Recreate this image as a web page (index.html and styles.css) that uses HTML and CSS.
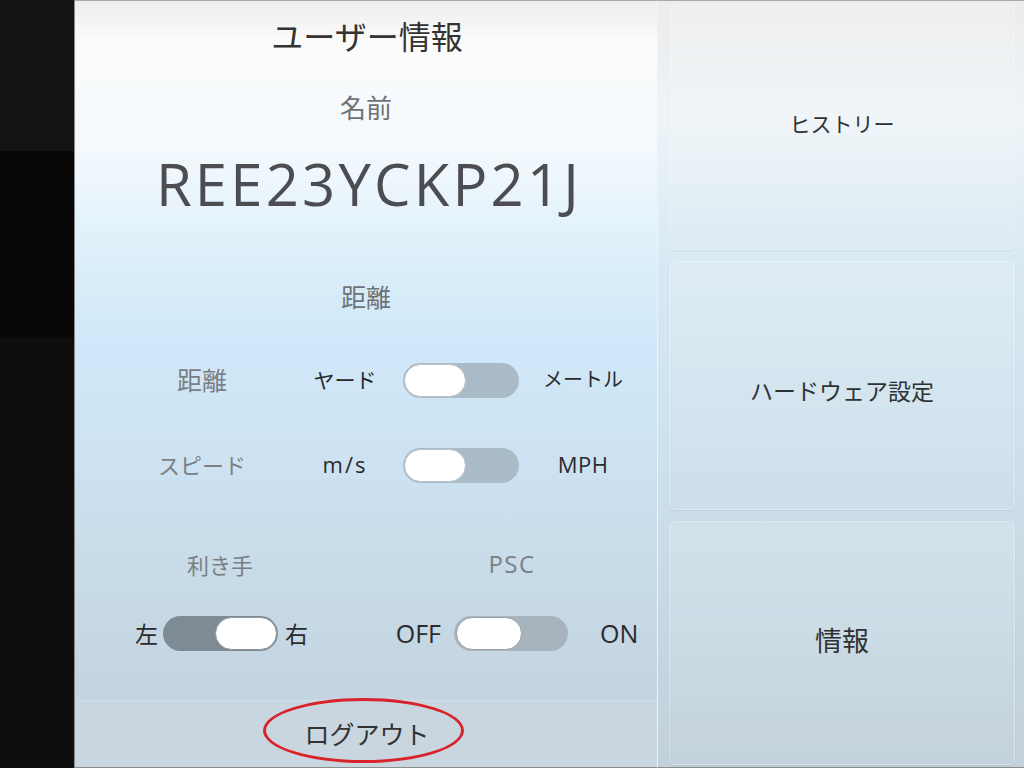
FILE: index.html
```html
<!DOCTYPE html>
<html lang="ja">
<head>
<meta charset="utf-8">
<title>ユーザー情報</title>
<link rel="stylesheet" href="styles.css">
</head>
<body>
<div class="screen">
  <aside class="side">
    <div class="side-a"></div>
    <div class="side-b"></div>
    <div class="side-c"></div>
  </aside>

  <main class="main">
    <h1 class="title">ユーザー情報</h1>
    <div class="name-label">名前</div>
    <div class="name-id">REE23YCKP21J</div>

    <div class="sec-head">距離</div>

    <div class="row row1">
      <span class="c1 lbl kanji">距離</span>
      <span class="c2 val">ヤード</span>
      <span class="toggle"><span class="knob"></span></span>
      <span class="c4 val">メートル</span>
    </div>

    <div class="row row2">
      <span class="c1 lbl">スピード</span>
      <span class="c2 val lat ms">m/s</span>
      <span class="toggle"><span class="knob"></span></span>
      <span class="c4 val lat">MPH</span>
    </div>

    <div class="pair-head">
      <span class="half lbl">利き手</span>
      <span class="half lbl lat psc">PSC</span>
    </div>

    <div class="pair-row">
      <div class="half group-l">
        <span class="val">左</span>
        <span class="toggle dark on"><span class="knob"></span></span>
        <span class="val">右</span>
      </div>
      <div class="half group-r">
        <span class="val lat big">OFF</span>
        <span class="toggle psc-t"><span class="knob"></span></span>
        <span class="val lat big">ON</span>
      </div>
    </div>

    <div class="logout">
      <span class="logout-text">ログアウト</span>
      <span class="ring"></span>
    </div>
  </main>

  <nav class="menu">
    <div class="btn btn-history">ヒストリー</div>
    <div class="btn btn-hw">ハードウェア設定</div>
    <div class="btn btn-info">情報</div>
  </nav>
</div>
</body>
</html>
```

FILE: styles.css
```css
* { box-sizing: border-box; }
html, body { margin: 0; padding: 0; }
body {
  width: 1024px;
  height: 768px;
  overflow: hidden;
  background: #0e0e0e;
  font-family: "Noto Sans CJK JP", "Noto Sans", sans-serif;
}
.screen {
  display: flex;
  width: 1024px;
  height: 768px;
}
.side {
  width: 75px;
  display: flex;
  flex-direction: column;
  border-right: 1px solid #8a8a8a;
  flex: none;
}
.side-a { height: 151px; background: #131313; }
.side-b { height: 187px; background: #070707; }
.side-c { flex: 1; background: #0e0e0e; }

.main {
  width: 582px;
  flex: none;
  display: flex;
  flex-direction: column;
  border-top: 1px solid #a9a9a9;
  border-bottom: 1px solid #8c8c8c;
  background: linear-gradient(180deg, #ededed 0px, #fbfbfb 40px, #f3f9fd 150px, #daeef9 270px, #d0e8f9 340px, #cde3f3 450px, #c8dbe8 570px, #c4d4e0 700px);
}
.title {
  margin: 0;
  height: 72px;
  display: flex;
  align-items: center;
  justify-content: center;
  font-size: 32px;
  font-weight: 400;
  color: #333;
  padding: 0 0 5px 2px;
}
.name-label {
  height: 70px;
  display: flex;
  align-items: center;
  justify-content: center;
  font-size: 26px;
  color: #6f7275;
  padding-bottom: 4px;
}
.name-id {
  height: 84px;
  display: flex;
  align-items: center;
  justify-content: center;
  font-family: "Open Sans", "Noto Sans", sans-serif;
  font-size: 58px;
  letter-spacing: 3.2px;
  color: #4b4d50;
  padding: 0 0 4px 6px;
}
.sec-head {
  margin-top: 45px;
  height: 50px;
  display: flex;
  align-items: center;
  justify-content: center;
  font-size: 25px;
  color: #6f7275;
  padding-bottom: 3px;
}
.lbl { color: #7b7f83; font-size: 22px; }
.kanji { font-size: 25px; }
.val { color: #2a2b2d; font-size: 21px; }
.lat { font-family: "Open Sans", "Noto Sans", sans-serif; }
.ms { font-size: 22px; letter-spacing: 2px; }

.row {
  height: 50px;
  display: flex;
  align-items: center;
  padding-left: 64px;
}
.row > span { padding-bottom: 3px; text-align: center; }
.row1 { margin-top: 33px; }
.row2 { margin-top: 35px; }
.c1 { width: 126px; }
.c2 { width: 104px; margin-left: 28px; }
.row .toggle { margin-left: 6px; padding: 0; }
.c4 { width: 108px; margin-left: 10px; }
.row1 .c4 { font-size: 20px; }
.row2 .c4 { font-size: 22px; letter-spacing: 0.5px; }

.toggle {
  position: relative;
  display: inline-block;
  width: 116px;
  height: 35px;
  border-radius: 18px;
  background: #aabbc8;
  flex: none;
}
.toggle .knob {
  position: absolute;
  left: 1px;
  top: 1px;
  width: 62px;
  height: 33px;
  border-radius: 17px;
  background: #fff;
  border: 1px solid #b9c2c8;
}
.toggle.dark { background: #7f8b94; width: 115px; }
.toggle.on .knob { left: auto; right: 1px; border-color: #8a959c; }
.toggle.psc-t { width: 114px; background: #a8b4bd; }
.toggle.psc-t .knob { left: 2px; width: 66px; border-color: #99a3aa; }

.pair-head {
  margin-top: 50px;
  height: 50px;
  display: flex;
  align-items: center;
}
.pair-head .half { padding-bottom: 3px; }
.half {
  width: 290px;
  display: flex;
  align-items: center;
  justify-content: center;
}
.psc { font-size: 24px; letter-spacing: 1.5px; padding-left: 4px; }

.pair-row {
  margin-top: 18px;
  height: 50px;
  display: flex;
  align-items: center;
}
.group-l { padding-left: 3px; }
.group-l .val { font-size: 23px; }
.group-l .toggle { margin: 0 7px 0 5px; }
.group-r { padding-left: 14px; }
.group-r .big { font-size: 25px; }
.group-r .toggle { margin: 0 32px 0 13px; }

.logout {
  position: relative;
  margin-top: auto;
  height: 67px;
  display: flex;
  align-items: center;
  justify-content: center;
  background: #c9d6e0;
  border-top: 1px solid #d3dee7;
}
.logout-text {
  font-size: 25px;
  color: #333;
  padding-left: 2px;
  padding-bottom: 2px;
}
.ring {
  position: absolute;
  left: 188px;
  top: -3px;
  width: 201px;
  height: 65px;
  border: 3px solid #d9232b;
  border-radius: 50%;
}

.menu {
  flex: 1;
  display: flex;
  flex-direction: column;
  gap: 11px;
  padding: 3px 9px 2px 11px;
  border-top: 1px solid #a9a9a9;
  border-bottom: 1px solid #8c8c8c;
  border-left: 1px solid #e9f4fb;
  background: linear-gradient(180deg, #ececec 0px, #eef4f8 120px, #d9e9f3 260px, #cfe2ee 420px, #c9dbe6 560px, #c2d0da 768px);
}
.btn {
  flex: 1;
  display: flex;
  align-items: center;
  justify-content: center;
  font-size: 24px;
  color: #2f3235;
  border-radius: 6px;
  border: 1px solid rgba(255,255,255,0.3);
  background: linear-gradient(180deg, rgba(255,255,255,0.16), rgba(255,255,255,0.04));
  box-shadow: 0 1px 2px rgba(80,100,120,0.1);
}
.btn-history { font-size: 21px; padding-bottom: 8px; }
.btn-hw { font-size: 23px; padding-top: 10px; }
.btn-info { font-size: 27px; padding-bottom: 6px; }
```
